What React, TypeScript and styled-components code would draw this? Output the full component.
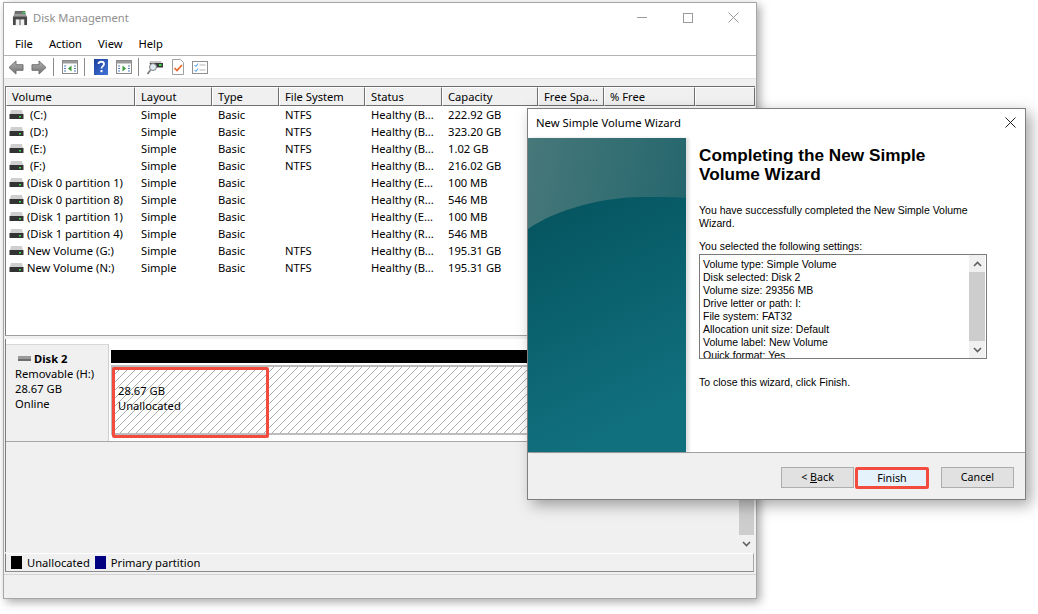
import React from 'react';
import styled, { createGlobalStyle } from 'styled-components';

const Global = createGlobalStyle`
  html, body { margin: 0; padding: 0; background: #fff; }
  body { font-family: "Noto Sans", "Liberation Sans", sans-serif; font-size: 11.2px; color: #000; }
`;

const Desktop = styled.div`
  position: relative;
  width: 1038px;
  height: 614px;
  overflow: hidden;
  background: #fff;
`;

const MainWindow = styled.div`
  position: absolute;
  left: 3px;
  top: 2px;
  width: 752px;
  height: 595px;
  border: 1px solid #a6a6a6;
  background: #f0f0f0;
  box-shadow: 3px 3px 9px rgba(0, 0, 0, 0.35);
  display: flex;
  flex-direction: column;
`;

const TitleBar = styled.div`
  height: 29px;
  flex: none;
  background: #fff;
  display: flex;
  align-items: center;
  padding-left: 8px;
  gap: 5px;
  color: #8e8e8e;
`;

const WinControls = styled.div`
  margin-left: auto;
  display: flex;
  align-items: center;
  gap: 1px;
  height: 100%;
`;

const WinControl = styled.div`
  width: 45px;
  height: 29px;
  display: flex;
  align-items: center;
  justify-content: center;
`;

const MenuBar = styled.div`
  height: 23px;
  flex: none;
  background: #fff;
  border-bottom: 1px solid #b4b4b4;
  display: flex;
  align-items: center;
  padding-left: 11px;
  gap: 16px;
`;

const Toolbar = styled.div`
  height: 22px;
  flex: none;
  background: #fff;
  display: flex;
  align-items: center;
  padding-left: 4px;
`;

const ToolIcon = styled.svg<{ $after?: number }>`
  display: block;
  flex: none;
  margin-right: ${(p) => p.$after ?? 0}px;
`;

const ToolSep = styled.div<{ $l: number; $r: number }>`
  width: 1px;
  height: 18px;
  background: #8c8c8c;
  margin: 0 ${(p) => p.$r}px 0 ${(p) => p.$l}px;
`;

const Strip = styled.div`
  height: 8px;
  flex: none;
  background: #f0f0f0;
  border-top: 1px solid #e3e3e3;
  box-sizing: border-box;
`;

const ListPane = styled.div`
  height: 250px;
  flex: none;
  margin: 0 1px;
  background: #fff;
  border-left: 1px solid #7f7f7f;
  border-top: 1px solid #6d6d6d;
  border-bottom: 1px solid #a0a0a0;
  box-sizing: border-box;
  overflow: hidden;
`;

const cols = '129px 77px 67px 86px 77px 96px 66px 91px 1fr';

const HeaderRow = styled.div`
  display: grid;
  grid-template-columns: ${cols};
  height: 19px;
`;

const HeaderCell = styled.div`
  background: #f0f0f0;
  border-top: 1px solid #fff;
  border-left: 1px solid #fff;
  border-right: 1px solid #6f6f6f;
  border-bottom: 1px solid #6f6f6f;
  box-sizing: border-box;
  padding-left: 5px;
  line-height: 17px;
  white-space: nowrap;
  overflow: hidden;
`;

const Row = styled.div`
  display: grid;
  grid-template-columns: ${cols};
  height: 17px;
  line-height: 17px;
  white-space: nowrap;
`;

const Cell = styled.div`
  padding-left: 6px;
  overflow: hidden;
`;

const VolumeCell = styled.div`
  display: flex;
  align-items: center;
  gap: 3px;
  padding-left: 3px;
`;

const VolumeName = styled.span`
  white-space: pre;
`;

const GraphPane = styled.div`
  height: 213px;
  margin: 3px 2px 0 1px;
  flex: none;
  display: flex;
  border-left: 1px solid #7f7f7f;
  background: #f0f0f0;
`;

const GraphMain = styled.div`
  flex: 1;
  min-width: 0;
`;

const DiskRow = styled.div`
  height: 103px;
  background: #fff;
  border-bottom: 1px solid #a6a6a6;
  display: flex;
  box-sizing: border-box;
`;

const DiskInfo = styled.div`
  width: 103px;
  margin-top: 5px;
  background: #f0f0f0;
  border-top: 1px solid #d8d8d8;
  border-right: 1px solid #cfcfcf;
  padding: 6px 0 0 9px;
  box-sizing: border-box;
  flex: none;
  line-height: 15px;
`;

const DiskName = styled.div`
  display: flex;
  align-items: center;
  gap: 3px;
  font-weight: 700;
`;

const DiskGlyph = styled.svg`
  display: block;
  margin-left: 3px;
`;

const DiskBody = styled.div`
  flex: 1;
  padding: 11px 0 0 2px;
  min-width: 0;
`;

const BlackBar = styled.div`
  height: 13px;
  background: #000;
`;

const Hatched = styled.div`
  height: 70px;
  margin-top: 2px;
  box-sizing: border-box;
  border: 2px solid #bdbdbd;
  background: repeating-linear-gradient(-45deg, #adadad 0 0.9px, #fff 0.9px 5.66px);
  position: relative;
`;

const Highlight = styled.div`
  position: absolute;
  left: -1px;
  top: 0;
  width: 157px;
  height: 71px;
  box-sizing: border-box;
  border: 3px solid #f44b3f;
  border-radius: 2px;
  padding: 13px 0 0 3px;
  line-height: 15px;
`;

const Scrollbar = styled.div`
  width: 15px;
  flex: none;
  background: #f0f0f0;
  display: flex;
  flex-direction: column;
`;

const Thumb = styled.div`
  flex: 1;
  background: #cdcdcd;
`;

const Arrow = styled.div`
  height: 17px;
  flex: none;
  display: flex;
  align-items: center;
  justify-content: center;
`;

const Legend = styled.div`
  height: 19px;
  margin: 1px 2px 2px 1px;
  flex: none;
  border-top: 1px solid #fff;
  border-left: 1px solid #7f7f7f;
  border-bottom: 1px solid #8c8c8c;
  border-right: 1px solid #a6a6a6;
  box-sizing: border-box;
  display: flex;
  align-items: center;
  padding-left: 5px;
`;

const Swatch = styled.div<{ $c: string }>`
  width: 11px;
  height: 13px;
  background: ${(p) => p.$c};
  margin-right: 5px;
`;

const LegendLabel = styled.span`
  margin-right: 5px;
`;

const WindowStatus = styled.div`
  flex: 1;
  border-top: 1px solid #d4d4d4;
  background: #f0f0f0;
`;

const Wizard = styled.div`
  position: absolute;
  left: 527px;
  top: 108px;
  width: 497px;
  height: 390px;
  border: 1px solid #7f7f7f;
  background: #fff;
  box-shadow: 5px 5px 14px rgba(0, 0, 0, 0.35);
  display: flex;
  flex-direction: column;
  font-family: "Liberation Sans", Arial, sans-serif;
  font-size: 10.5px;
`;

const WizardTitle = styled.div`
  height: 29px;
  flex: none;
  box-sizing: border-box;
  display: flex;
  align-items: center;
  justify-content: space-between;
  padding: 0 9px 2px 8px;
  font-family: "Noto Sans", sans-serif;
  font-size: 11.3px;
`;

const WizardBody = styled.div`
  flex: 1;
  display: flex;
  min-height: 0;
`;

const Banner = styled.div`
  width: 158px;
  flex: none;
  position: relative;
  background: linear-gradient(100deg, #47787a 0%, #2b6a70 65%, #1d5f6a 100%);
  box-shadow: 3px 0 3px rgba(0, 0, 0, 0.13);
  overflow: hidden;
`;

const BannerArt = styled.svg`
  display: block;
  position: absolute;
  inset: 0;
`;

const WizardContent = styled.div`
  flex: 1;
  padding: 8px 0 0 13px;
  min-width: 0;
`;

const WizardHeading = styled.h1`
  margin: 0 0 20px;
  font-family: "Liberation Sans", Arial, sans-serif;
  font-size: 17.2px;
  line-height: 19px;
  font-weight: 700;
  width: 260px;
`;

const Para = styled.p<{ $mb?: number }>`
  margin: 0 0 ${(p) => p.$mb ?? 0}px;
  line-height: 13px;
  width: 290px;
`;

const SettingsBox = styled.div`
  width: 288px;
  height: 105px;
  margin: 1px 0 17px;
  border: 1px solid #7a7a7a;
  box-sizing: border-box;
  display: flex;
  overflow: hidden;
`;

const SettingsText = styled.div`
  flex: 1;
  padding: 3px 0 0 3px;
  line-height: 13px;
  white-space: nowrap;
  overflow: hidden;
`;

const SettingsScroll = styled.div`
  width: 16px;
  flex: none;
  margin-right: 1px;
  background: #f0f0f0;
  display: flex;
  flex-direction: column;
`;

const SettingsThumb = styled.div`
  flex: 1;
  background: #cdcdcd;
`;

const WizardFooter = styled.div`
  height: 47px;
  flex: none;
  background: #f0f0f0;
  border-top: 1px solid #a0a0a0;
  box-sizing: border-box;
  display: flex;
  align-items: flex-start;
  justify-content: flex-end;
  padding: 14px 11px 0 0;
  font-family: "Noto Sans", sans-serif;
  font-size: 10.7px;
`;

const Button = styled.div<{ $primary?: boolean }>`
  width: ${(p) => (p.$primary ? 74 : 73)}px;
  height: ${(p) => (p.$primary ? 22 : 21)}px;
  margin: 0 ${(p) => (p.$primary ? 12 : 0)}px 0 ${(p) => (p.$primary ? 1 : 0)}px;
  box-sizing: border-box;
  border: ${(p) => (p.$primary ? '3px solid #f44b3f' : '1px solid #adadad')};
  border-radius: ${(p) => (p.$primary ? 2 : 0)}px;
  background: ${(p) => (p.$primary ? '#e5f1fb' : '#e1e1e1')};
  display: flex;
  align-items: center;
  justify-content: center;
  line-height: 1;
`;

const Underlined = styled.span`
  text-decoration: underline;
`;

const DriveIcon = () => (
  <svg width="15" height="10" viewBox="0 0 15 10" style={{ display: 'block', flex: 'none' }}>
    <path d="M2 0h11l1 4H1z" fill="#cfcfcf" />
    <rect x="0.5" y="4" width="14" height="5" fill="#333" />
    <rect x="10" y="6" width="2" height="1.500" fill="#3ddc4a" />
  </svg>
);

const AppIcon = () => (
  <svg width="16" height="16" viewBox="0 0 17 17" style={{ display: 'block', flex: 'none' }}>
    <path d="M3 2h11l2 6H1z" fill="#9a9a9a" />
    <rect x="3" y="1" width="11" height="3" fill="#6a6a6a" />
    <rect x="11" y="2" width="3" height="1.500" fill="#3fd14e" />
    <rect x="1" y="7" width="15" height="9" fill="#4a4a4a" />
    <rect x="4" y="10" width="4" height="6" fill="#f2f2f2" />
    <rect x="9" y="10" width="4" height="6" fill="#f2f2f2" />
  </svg>
);

const NavArrow = ({ flip, after }: { flip?: boolean; after?: number }) => (
  <ToolIcon $after={after} width="16" height="15" viewBox="0 0 17 16" style={flip ? { transform: 'scaleX(-1)' } : undefined}>
    <defs>
      <linearGradient id="na" x1="0" y1="0" x2="0" y2="1">
        <stop offset="0" stopColor="#b5b5b5" />
        <stop offset="1" stopColor="#6f6f6f" />
      </linearGradient>
    </defs>
    <path d="M1 8 8.500 1v4H16v6H8.500v4z" fill="url(#na)" stroke="#6e6e6e" strokeWidth="1" />
  </ToolIcon>
);

const PaneIcon = ({ arrow, left }: { arrow: string; left?: boolean }) => (
  <ToolIcon width="16" height="14" viewBox="0 0 16 14">
    <rect x="0.5" y="0.5" width="15" height="13" fill="#fff" stroke="#8a8a8a" />
    <rect x="1" y="1" width="14" height="2.500" fill="#9b9b9b" />
    <path d="M2 6h2M2 8.500h2M2 11h2M12 6h2M12 8.500h2M12 11h2" stroke="#4f81bd" strokeWidth="1" />
    <path d={left ? 'M9.500 5.500v6L6 8.500z' : 'M6.500 5.500v6L10 8.500z'} fill={arrow} />
  </ToolIcon>
);

const HelpIcon = () => (
  <ToolIcon $after={8} width="14" height="16" viewBox="0 0 14 16">
    <defs>
      <linearGradient id="hp" x1="0" y1="0" x2="1" y2="1">
        <stop offset="0" stopColor="#1d3f9c" />
        <stop offset="1" stopColor="#3f74d8" />
      </linearGradient>
    </defs>
    <rect width="14" height="16" fill="url(#hp)" />
    <path d="M4.500 5c0-3 5.500-3 5.500 0 0 2.200-2.500 2-2.500 4.500" fill="none" stroke="#fff" strokeWidth="1.800" />
    <rect x="6.500" y="11" width="2" height="2.200" fill="#fff" />
  </ToolIcon>
);

const ScanIcon = () => (
  <ToolIcon $after={9} width="16" height="16" viewBox="0 0 16 16">
    <path d="M3 2h11l1 3H2z" fill="#c8c8c8" />
    <rect x="3" y="4" width="13" height="4.500" fill="#3a3a3a" />
    <rect x="12" y="5" width="2.500" height="2" fill="#3ddc4a" />
    <circle cx="6" cy="8" r="3.500" fill="#dfe9f2" stroke="#7d7d7d" />
    <path d="M3.500 11 .5 15" stroke="#777" strokeWidth="1.600" />
  </ToolIcon>
);

const DocIcon = () => (
  <ToolIcon $after={8} width="12" height="16" viewBox="0 0 12 16">
    <path d="M.5.500h8l3 3v12H.5z" fill="#fff" stroke="#a0a0a0" />
    <path d="M2.500 9 5 11.500 10 6" fill="none" stroke="#e9662c" strokeWidth="1.700" />
  </ToolIcon>
);

const ChecklistIcon = () => (
  <ToolIcon width="16" height="13" viewBox="0 0 16 13">
    <rect x="0.5" y="0.5" width="15" height="12" fill="#fff" stroke="#8f8f8f" />
    <path d="M2.500 4 4 5.500 6 2.500M2.500 9 4 10.500 6 7.500" fill="none" stroke="#3f8fe0" strokeWidth="1" />
    <path d="M7.500 4h6M7.500 9h6" stroke="#b5b5b5" strokeWidth="1" />
  </ToolIcon>
);

const Chevron = ({ up }: { up?: boolean }) => (
  <svg width="9" height="6" viewBox="0 0 9 6" style={{ display: 'block' }}>
    <path d={up ? 'M1 5 4.500 1.500 8 5' : 'M1 1 4.500 4.500 8 1'} fill="none" stroke="#606060" strokeWidth="1.600" />
  </svg>
);

const headers = ['Volume', 'Layout', 'Type', 'File System', 'Status', 'Capacity', 'Free Spa...', '% Free', ''];

const rows: [string, string, string, string, string, string][] = [
  ['\u00a0(C:)', 'Simple', 'Basic', 'NTFS', 'Healthy (B...', '222.92 GB'],
  ['\u00a0(D:)', 'Simple', 'Basic', 'NTFS', 'Healthy (B...', '323.20 GB'],
  ['\u00a0(E:)', 'Simple', 'Basic', 'NTFS', 'Healthy (B...', '1.02 GB'],
  ['\u00a0(F:)', 'Simple', 'Basic', 'NTFS', 'Healthy (B...', '216.02 GB'],
  ['(Disk 0 partition 1)', 'Simple', 'Basic', '', 'Healthy (E...', '100 MB'],
  ['(Disk 0 partition 8)', 'Simple', 'Basic', '', 'Healthy (R...', '546 MB'],
  ['(Disk 1 partition 1)', 'Simple', 'Basic', '', 'Healthy (E...', '100 MB'],
  ['(Disk 1 partition 4)', 'Simple', 'Basic', '', 'Healthy (R...', '546 MB'],
  ['New Volume (G:)', 'Simple', 'Basic', 'NTFS', 'Healthy (B...', '195.31 GB'],
  ['New Volume (N:)', 'Simple', 'Basic', 'NTFS', 'Healthy (B...', '195.31 GB'],
];

const settings = [
  'Volume type: Simple Volume',
  'Disk selected: Disk 2',
  'Volume size: 29356 MB',
  'Drive letter or path: I:',
  'File system: FAT32',
  'Allocation unit size: Default',
  'Volume label: New Volume',
  'Quick format: Yes',
];

export default function App() {
  return (
    <Desktop>
      <Global />
      <MainWindow>
        <TitleBar>
          <AppIcon />
          <span>Disk Management</span>
          <WinControls>
            <WinControl>
              <svg width="10" height="1" style={{ display: 'block' }}><rect width="10" height="1" fill="#9a9a9a" /></svg>
            </WinControl>
            <WinControl>
              <svg width="10" height="10" style={{ display: 'block' }}><rect x="0.5" y="0.5" width="9" height="9" fill="none" stroke="#9a9a9a" /></svg>
            </WinControl>
            <WinControl>
              <svg width="11" height="11" style={{ display: 'block' }}><path d="M.5.500l10 10M10.500.500l-10 10" stroke="#9a9a9a" /></svg>
            </WinControl>
          </WinControls>
        </TitleBar>
        <MenuBar>
          <span>File</span>
          <span>Action</span>
          <span>View</span>
          <span>Help</span>
        </MenuBar>
        <Toolbar>
          <NavArrow after={7} />
          <NavArrow flip />
          <ToolSep $l={6} $r={8} />
          <PaneIcon arrow="#3a9a3a" left />
          <ToolSep $l={6} $r={9} />
          <HelpIcon />
          <PaneIcon arrow="#3a9a3a" />
          <ToolSep $l={6} $r={8} />
          <ScanIcon />
          <DocIcon />
          <ChecklistIcon />
        </Toolbar>
        <Strip />
        <ListPane>
          <HeaderRow>
            {headers.map((h, i) => (
              <HeaderCell key={i}>{h}</HeaderCell>
            ))}
          </HeaderRow>
          {rows.map((r) => (
            <Row key={r[0]}>
              <VolumeCell>
                <DriveIcon />
                <VolumeName>{r[0]}</VolumeName>
              </VolumeCell>
              {r.slice(1).map((c, i) => (
                <Cell key={i}>{c}</Cell>
              ))}
            </Row>
          ))}
        </ListPane>
        <GraphPane>
          <GraphMain>
            <DiskRow>
              <DiskInfo>
                <DiskName>
                  <DiskGlyph width="13" height="6" viewBox="0 0 13 6">
                    <rect width="13" height="3" fill="#9a9a9a" />
                    <rect y="3" width="13" height="2" fill="#6e6e6e" />
                  </DiskGlyph>
                  <span>Disk 2</span>
                </DiskName>
                <div>Removable (H:)</div>
                <div>28.67 GB</div>
                <div>Online</div>
              </DiskInfo>
              <DiskBody>
                <BlackBar />
                <Hatched>
                  <Highlight>
                    <div>28.67 GB</div>
                    <div>Unallocated</div>
                  </Highlight>
                </Hatched>
              </DiskBody>
            </DiskRow>
          </GraphMain>
          <Scrollbar>
            <Thumb />
            <Arrow>
              <Chevron />
            </Arrow>
          </Scrollbar>
        </GraphPane>
        <Legend>
          <Swatch $c="#000" />
          <LegendLabel>Unallocated</LegendLabel>
          <Swatch $c="#000080" />
          <LegendLabel>Primary partition</LegendLabel>
        </Legend>
        <WindowStatus />
      </MainWindow>

      <Wizard>
        <WizardTitle>
          <span>New Simple Volume Wizard</span>
          <svg width="11" height="11" style={{ display: 'block' }}>
            <path d="M.5.500l10 10M10.500.500l-10 10" stroke="#222" />
          </svg>
        </WizardTitle>
        <WizardBody>
          <Banner>
            <BannerArt width="158" height="314" viewBox="0 0 158 314">
              <defs>
                <linearGradient id="ba" x1="0" y1="0" x2="0.3" y2="1">
                  <stop offset="0" stopColor="#04535e" />
                  <stop offset="1" stopColor="#11707e" />
                </linearGradient>
              </defs>
              <path d="M0 91C30 70 80 58 120 59c15 0 30 0 38 1v254H0z" fill="url(#ba)" />
            </BannerArt>
          </Banner>
          <WizardContent>
            <WizardHeading>Completing the New Simple Volume Wizard</WizardHeading>
            <Para $mb={10}>You have successfully completed the New Simple Volume Wizard.</Para>
            <Para>You selected the following settings:</Para>
            <SettingsBox>
              <SettingsText>
                {settings.map((s) => (
                  <div key={s}>{s}</div>
                ))}
              </SettingsText>
              <SettingsScroll>
                <Arrow>
                  <Chevron up />
                </Arrow>
                <SettingsThumb />
                <Arrow>
                  <Chevron />
                </Arrow>
              </SettingsScroll>
            </SettingsBox>
            <Para>To close this wizard, click Finish.</Para>
          </WizardContent>
        </WizardBody>
        <WizardFooter>
          <Button>
            &lt;&nbsp;<Underlined>B</Underlined>ack
          </Button>
          <Button $primary>Finish</Button>
          <Button>Cancel</Button>
        </WizardFooter>
      </Wizard>
    </Desktop>
  );
}
